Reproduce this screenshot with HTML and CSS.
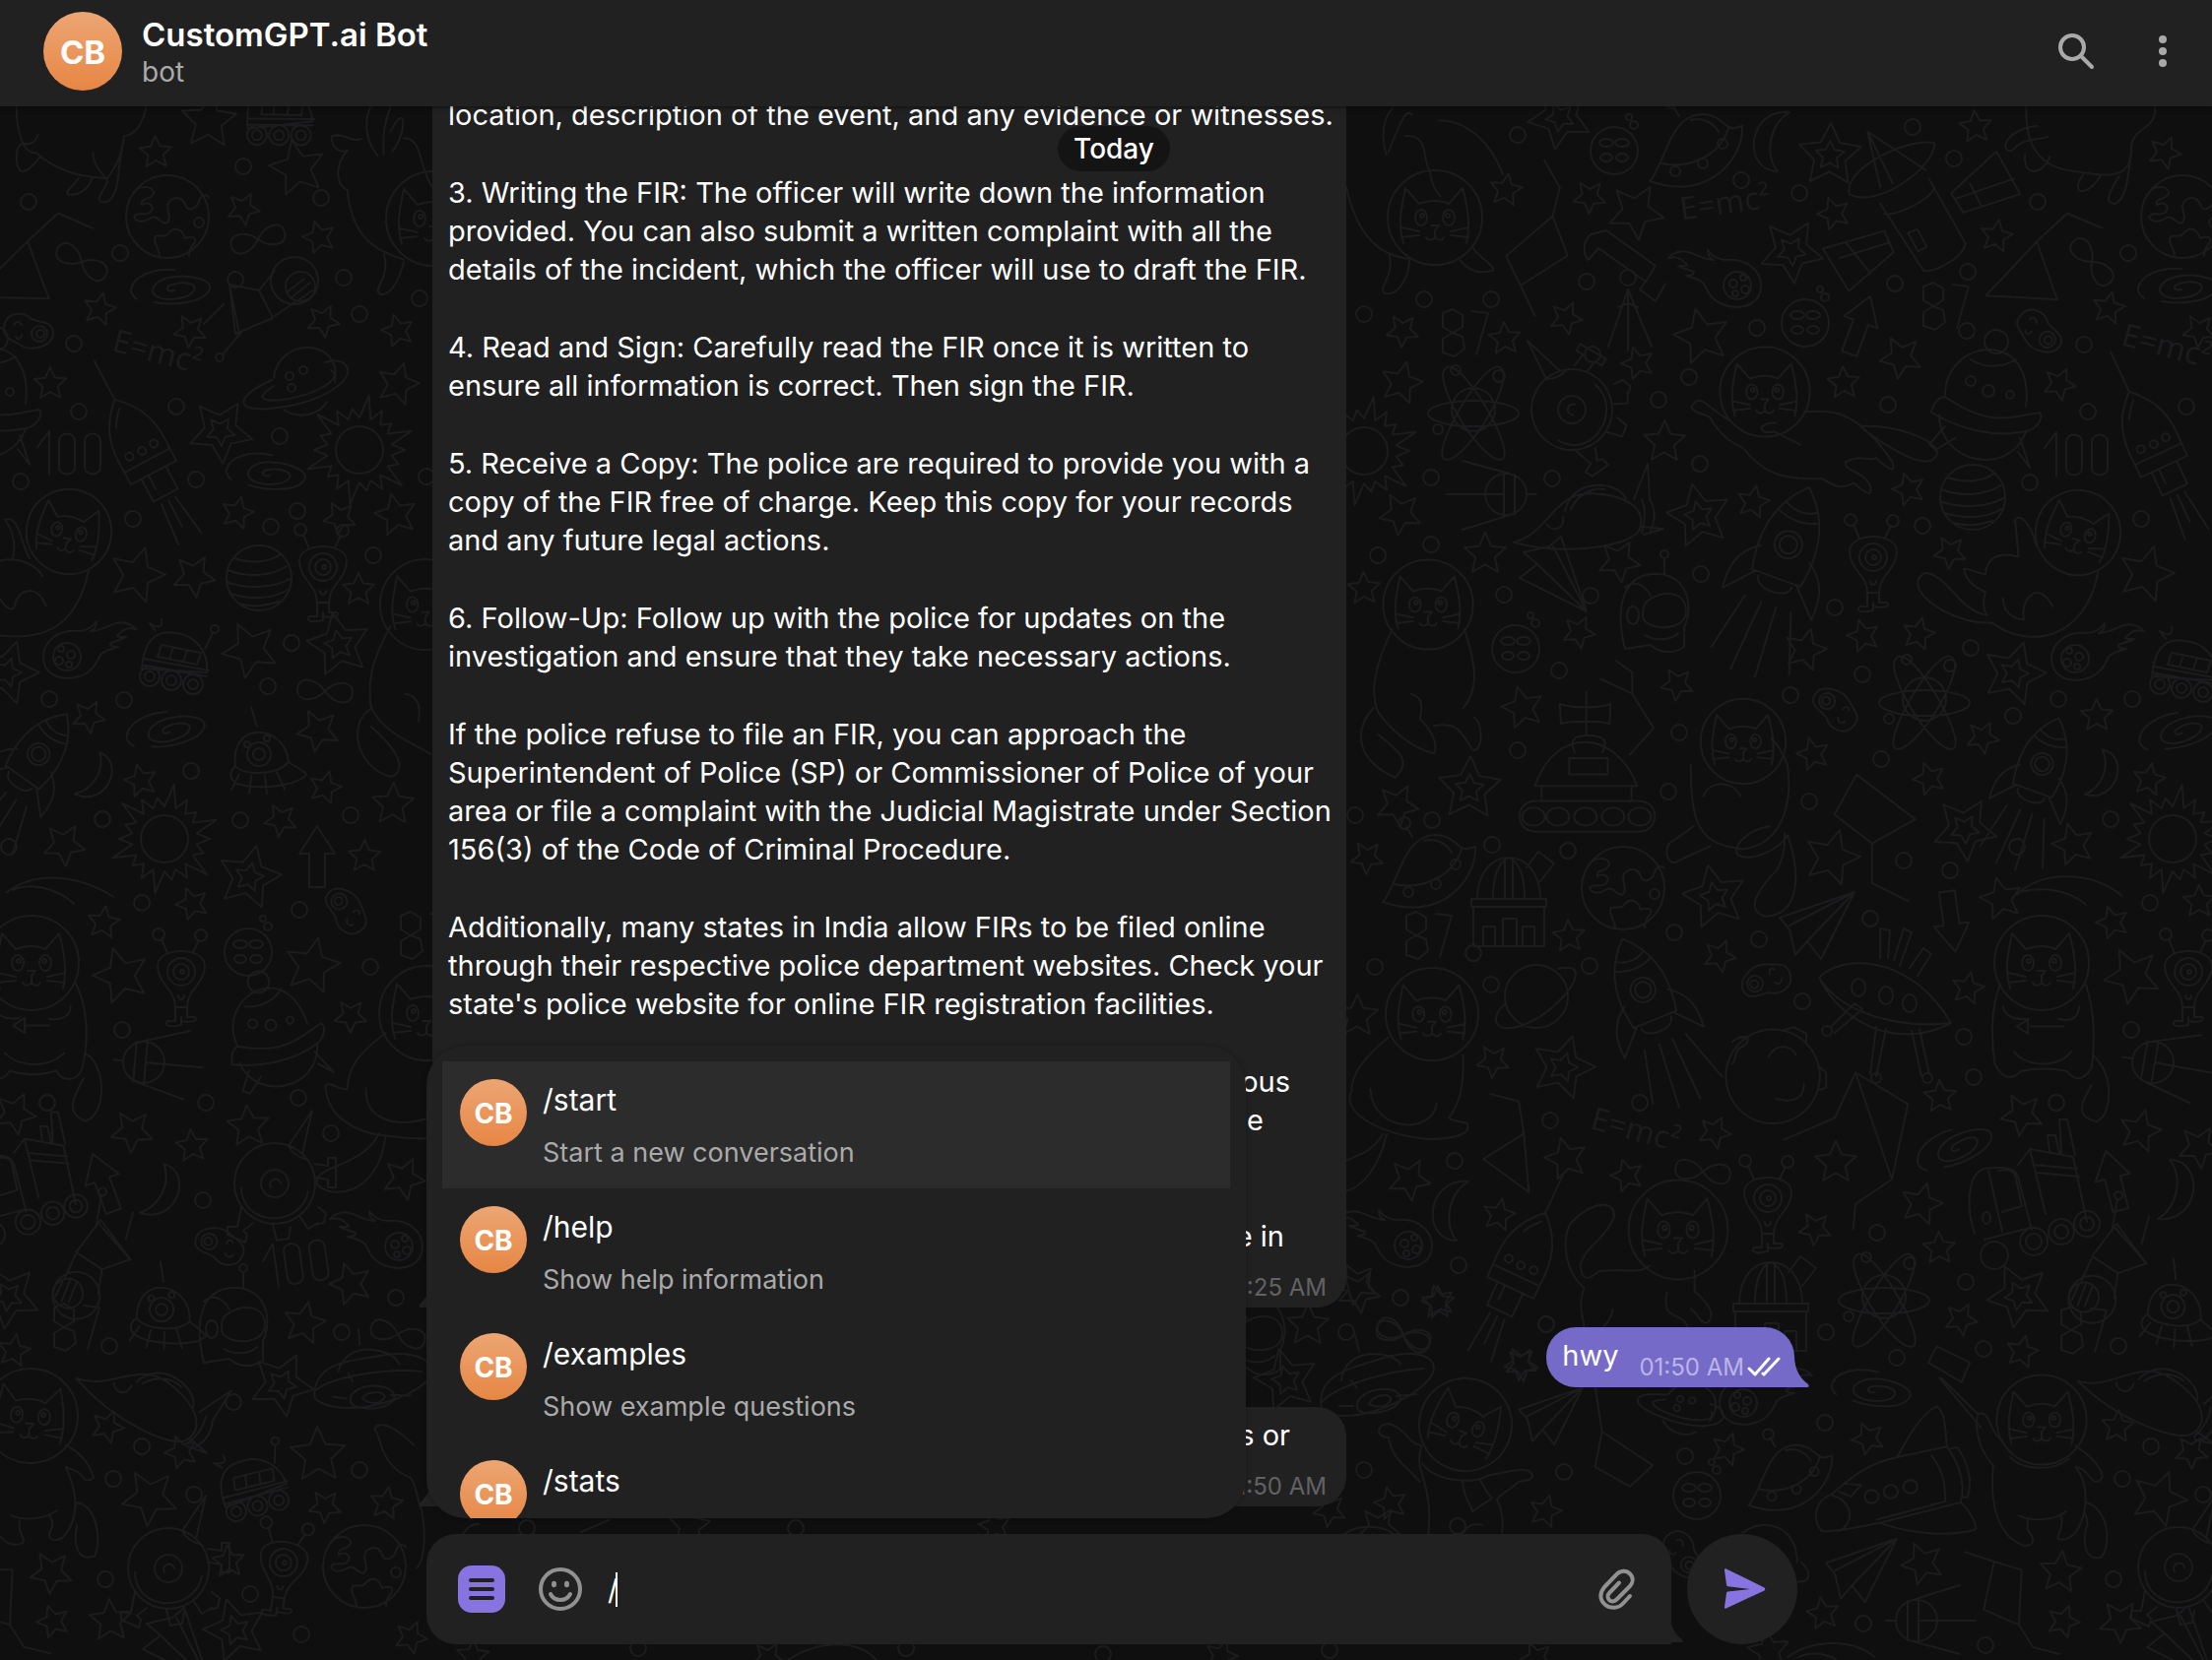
FILE: index.html
```html
<!DOCTYPE html>
<html lang="en">
<head>
<meta charset="utf-8">
<meta name="viewport" content="width=device-width, initial-scale=1">
<title>CustomGPT.ai Bot</title>
<link rel="stylesheet" href="styles.css">
</head>
<body>
<header class="topbar">
  <span class="avatar avatar-lg">CB</span>
  <div class="peer">
    <h1 class="peer-name">CustomGPT.ai Bot</h1>
    <p class="peer-status">bot</p>
  </div>
  <button class="icon-btn" type="button" aria-label="Search">
    <svg width="48" height="48" viewBox="0 0 48 48" fill="none" stroke="currentColor" stroke-width="4" stroke-linecap="round"><circle cx="20" cy="20" r="12"/><path d="M29 29l11 11"/></svg>
  </button>
  <button class="icon-btn" type="button" aria-label="More">
    <svg width="48" height="48" viewBox="0 0 48 48" fill="currentColor"><circle cx="24" cy="12" r="4"/><circle cx="24" cy="24" r="4"/><circle cx="24" cy="36" r="4"/></svg>
  </button>
</header>

<main class="chat">
  <svg class="wallpaper" id="wallpaper" width="2246" height="1686" aria-hidden="true"></svg>
  <div class="date-pill">Today</div>
  <div class="column">
    <section class="messages">
      <article class="bubble bubble-in bubble-first">
        <p>location, description of the event, and any evidence or witnesses.</p>
        <p>3. Writing the FIR: The officer will write down the information<br>provided. You can also submit a written complaint with all the<br>details of the incident, which the officer will use to draft the FIR.</p>
        <p>4. Read and Sign: Carefully read the FIR once it is written to<br>ensure all information is correct. Then sign the FIR.</p>
        <p>5. Receive a Copy: The police are required to provide you with a<br>copy of the FIR free of charge. Keep this copy for your records<br>and any future legal actions.</p>
        <p>6. Follow-Up: Follow up with the police for updates on the<br>investigation and ensure that they take necessary actions.</p>
        <p>If the police refuse to file an FIR, you can approach the<br>Superintendent of Police (SP) or Commissioner of Police of your<br>area or file a complaint with the Judicial Magistrate under Section<br>156(3) of the Code of Criminal Procedure.</p>
        <p>Additionally, many states in India allow FIRs to be filed online<br>through their respective police department websites. Check your<br>state's police website for online FIR registration facilities.</p>
        <p class="tail-text"><span class="end-a">serious</span><span class="end-b">the</span><span class="end-a">&nbsp;</span></p>
        <p class="tail-text"><span class="end-c">are in</span></p>
        <time class="stamp">01:25 AM</time>
        <svg class="tail tail-in" width="16" height="32" viewBox="0 0 16 32"><path d="M16 0v32H3c-3 0-3-3-1-4C8 22 14 12 14 0z" fill="currentColor"/></svg>
      </article>
      <article class="bubble bubble-out">
        <p>hwy</p>
        <time class="stamp">01:50 AM</time>
        <svg class="ticks" width="34" height="22" viewBox="0 0 34 22" fill="none" stroke="currentColor" stroke-width="3" stroke-linecap="round" stroke-linejoin="round"><path d="M2 13l6 6L22 3M16 18l1 1L32 3"/></svg>
        <svg class="tail tail-out" width="16" height="32" viewBox="0 0 16 32"><path d="M0 0v32h14c2 0 2-2 1-3C7 23 1 14 1 0z" fill="currentColor"/></svg>
      </article>
      <article class="bubble bubble-in">
        <p class="tail-text"><span class="end-a">questions or</span></p>
        <time class="stamp">01:50 AM</time>
        <svg class="tail tail-in" width="16" height="32" viewBox="0 0 16 32"><path d="M16 0v32H3c-3 0-3-3-1-4C8 22 14 12 14 0z" fill="currentColor"/></svg>
      </article>
    </section>

    <form class="composer">
      <ul class="commands">
        <li><a class="command is-active" href="#start"><span class="avatar">CB</span><span class="command-text"><b>/start</b><small>Start a new conversation</small></span></a></li>
        <li><a class="command" href="#help"><span class="avatar">CB</span><span class="command-text"><b>/help</b><small>Show help information</small></span></a></li>
        <li><a class="command" href="#examples"><span class="avatar">CB</span><span class="command-text"><b>/examples</b><small>Show example questions</small></span></a></li>
        <li><a class="command" href="#stats"><span class="avatar">CB</span><span class="command-text"><b>/stats</b></span></a></li>
      </ul>
      <div class="field">
        <button class="menu-btn" type="button" aria-label="Bot commands">
          <svg width="48" height="48" viewBox="0 0 48 48" stroke="currentColor" stroke-width="4" stroke-linecap="round"><path d="M13 15h22M13 24h22M13 33h22"/></svg>
        </button>
        <button class="icon-btn emoji-btn" type="button" aria-label="Emoji">
          <svg width="48" height="48" viewBox="0 0 48 48" fill="none" stroke="currentColor" stroke-width="4" stroke-linecap="round"><circle cx="24" cy="24" r="20"/><path d="M14 29c4 8 16 8 20 0"/><ellipse cx="17.500" cy="19" rx="2.500" ry="3.200" fill="currentColor" stroke="none"/><ellipse cx="30.500" cy="19" rx="2.500" ry="3.200" fill="currentColor" stroke="none"/></svg>
        </button>
        <div class="entry">
          <input class="entry-input" type="text" value="/" aria-label="Message">
          <span class="caret"></span>
        </div>
        <button class="icon-btn attach-btn" type="button" aria-label="Attach">
          <svg width="48" height="48" viewBox="0 0 48 48" fill="none" stroke="currentColor" stroke-width="4" stroke-linecap="round" stroke-linejoin="round"><path d="M38 31L31 38.500C26 44 18 44 13 40C7 35 7 28 12 22L24 9.500C28 5 34 4.500 38 8.500C42 12.500 41 17.500 38 21L24.500 34.500C22 37 19 37 17 35C15 33 15 30 17 28L27 17.500"/></svg>
        </button>
        <svg class="tail tail-field" width="14" height="32" viewBox="0 0 16 32"><path d="M0 0v32h14c2 0 2-2 1-3C7 23 1 14 1 0z" fill="currentColor"/></svg>
      </div>
      <button class="send" type="submit" aria-label="Send">
        <svg width="48" height="48" viewBox="0 0 48 48" fill="currentColor"><path d="M6 4.500C5.800 3.400 6.900 3 7.800 3.400L46 22.300C47.700 23.200 47.700 24.800 46 25.700L7.800 43.600C6.800 44 5.800 43.400 6 42.400L8 28C8.200 27 8.600 26.600 9.600 26.500L32 24L9.600 21.200C8.600 21 8.200 20.600 8 19.500z"/></svg>
      </button>
    </form>
  </div>
</main>
<script src="wallpaper.js"></script>
</body>
</html>
```

FILE: styles.css
```css
:root {
  --surface: #212121;
  --page: #0f0f0f;
  --accent: #8774e1;
  --muted: #aaaaaa;
}

* { box-sizing: border-box; }

body {
  margin: 0;
  height: 100vh;
  display: flex;
  flex-direction: column;
  overflow: hidden;
  background: var(--page);
  color: #fff;
  font: 400 29px/39px Inter, "Liberation Sans", sans-serif;
}

p, h1, ul { margin: 0; padding: 0; }
ul { list-style: none; }
button { border: 0; padding: 0; background: none; font: inherit; color: inherit; }
svg { display: block; }

.topbar {
  position: relative;
  z-index: 2;
  flex: none;
  height: 108px;
  padding: 0 26px 4px 44px;
  display: flex;
  align-items: center;
  gap: 40px;
  background: var(--surface);
  box-shadow: 0 1px 4px rgba(0, 0, 0, .5);
}

.avatar {
  flex: none;
  width: 68px;
  height: 68px;
  padding-top: 2px;
  border-radius: 50%;
  display: grid;
  place-items: center;
  background: linear-gradient(#eca673, #e78644);
  font-size: 28px;
  font-weight: 700;
}
.avatar-lg { width: 80px; height: 80px; font-size: 33px; }

.peer { flex: 1; margin-left: -20px; padding-top: 4px; }
.peer-name { font-size: 33px; font-weight: 600; line-height: 38px; }
.peer-status { font-size: 28px; line-height: 38px; color: var(--muted); }
.icon-btn { flex: none; color: var(--muted); }

.chat {
  position: relative;
  flex: 1;
  min-height: 0;
  padding-left: 12px;
  display: flex;
  justify-content: center;
}

.wallpaper {
  position: absolute;
  left: 0;
  top: -108px;
  fill: none;
  stroke: #1c1c1e;
  stroke-width: 2px;
  stroke-linecap: round;
  stroke-linejoin: round;
}
.wallpaper path { vector-effect: non-scaling-stroke; }
.wallpaper text { font: 32px "Open Sans", sans-serif; fill: #1c1c1e; stroke: none; }

.date-pill {
  position: absolute;
  z-index: 1;
  top: 20px;
  left: calc(50% + 8px);
  transform: translateX(-50%);
  padding: 4px 16px 3px;
  border-radius: 23px;
  background: #141414;
  font-size: 28px;
  font-weight: 500;
}

.column {
  position: relative;
  width: 1392px;
  max-width: 100%;
  padding-bottom: 16px;
  display: flex;
  flex-direction: column;
  gap: 28px;
}

.messages {
  flex: 1;
  min-height: 0;
  padding: 0 3px 0 6px;
  display: flex;
  flex-direction: column;
  justify-content: flex-end;
  gap: 20px;
}

.bubble {
  position: relative;
  flex: none;
  padding: 9px 16px 5px;
  border-radius: 30px;
}
.bubble-in {
  width: 928px;
  align-self: flex-start;
  display: flex;
  flex-direction: column;
  background: var(--surface);
  border-bottom-left-radius: 0;
  white-space: nowrap;
}
.bubble-in p + p { margin-top: 40px; }
.bubble-in .stamp { align-self: flex-end; margin: 18px 4px 0 0; color: #626264; }
.bubble-first { border-radius: 0 0 30px 0; }

.tail-text { display: flex; flex-direction: column; align-items: flex-end; }
.end-a { padding-right: 41px; }
.end-b { padding-right: 68px; }
.end-c { padding-right: 47px; }

.stamp { font-size: 24px; line-height: 30px; }

.bubble-out {
  align-self: flex-end;
  display: flex;
  align-items: flex-end;
  height: 61px;
  background: #766ac8;
  border-bottom-right-radius: 0;
}
.bubble-out p { align-self: flex-start; margin-right: 21px; }
.bubble-out .stamp { color: #bbb4e4; }
.bubble-out .ticks { margin: 0 -2px 5px 3px; }

.tail { position: absolute; bottom: 0; color: var(--surface); }
.tail-in { left: -14px; }
.tail-out { right: -15px; color: #766ac8; }
.tail-field { right: -12px; }

.composer {
  position: relative;
  flex: none;
  display: flex;
  gap: 16px;
}

.field {
  position: relative;
  flex: 1;
  height: 112px;
  padding: 0 32px;
  display: flex;
  align-items: center;
  border-radius: 30px 30px 0 30px;
  background: var(--surface);
}
.menu-btn { flex: none; border-radius: 14px; background: var(--accent); color: var(--surface); }
.emoji-btn { margin: 0 24px 0 32px; color: #919191; }
.attach-btn { color: #919191; }

.entry { position: relative; flex: 1; }
.entry-input {
  width: 100%;
  padding: 0;
  border: 0;
  outline: 0;
  background: none;
  color: #fff;
  font: inherit;
}
.caret { position: absolute; left: 8px; top: 2px; width: 2px; height: 35px; background: #fff; }

.send {
  flex: none;
  width: 112px;
  height: 112px;
  border-radius: 50%;
  display: grid;
  place-items: center;
  background: var(--surface);
  color: var(--accent);
}

.commands {
  position: absolute;
  left: 0;
  bottom: calc(100% + 16px);
  z-index: 1;
  width: 832px;
  height: 480px;
  padding: 16px;
  overflow: hidden;
  border-radius: 40px;
  background: var(--surface);
  box-shadow: 0 0 4px rgba(0, 0, 0, .3);
}
.command {
  height: 129px;
  padding: 18px;
  display: flex;
  gap: 16px;
  color: #fff;
  text-decoration: none;
}
.command.is-active { background: #2c2c2c; }
.command-text { display: flex; flex-direction: column; gap: 15px; padding-top: 2px; }
.command b { font-size: 30px; font-weight: 400; line-height: 39px; }
.command small { font-size: 27px; line-height: 38px; color: var(--muted); }
```

FILE: wallpaper.js
```js
// Space doodles behind the conversation.
const NS = "http://www.w3.org/2000/svg";
const root = document.getElementById("wallpaper");

const e = (x, y, a, b) => `M${x - a} ${y}a${a} ${b} 0 1 0 ${2 * a} 0a${a} ${b} 0 1 0 ${-2 * a} 0`;
const c = (x, y, r) => e(x, y, r, r);
const starPath = (r, k = 0.47) => {
  const pts = [];
  for (let i = 0; i < 10; i++) {
    const a = Math.PI * i / 5 - Math.PI / 2, q = i % 2 ? r * k : r;
    pts.push((Math.cos(a) * q).toFixed(1) + " " + (Math.sin(a) * q).toFixed(1));
  }
  return "M" + pts.join("L") + "z";
};
const sunRays = () => {
  const pts = [];
  for (let i = 0; i < 36; i++) {
    const a = Math.PI * i / 18, q = i % 2 ? 33 : [46, 42, 56][(i / 2) % 3];
    pts.push((Math.cos(a) * q).toFixed(1) + " " + (Math.sin(a) * q).toFixed(1));
  }
  return "M" + pts.join("L") + "z";
};

const art = {
  earth: c(0, 0, 42) + "M-34-24c4-8 20-8 20 0c-2 8-14 4-12 12c8-4 14 2 8 8c-6 4-12-2-16 4c2 6 10 6 16 2c8-6 12 8 18 4c6-6-4-14 2-22c8-6 14-2 16 4c2 8 12 4 14-4c2-6 6-8 10-4M-8 40c0-8-8-14-4-20c6-2 10 2 14-4c8-8 14 0 16 6c6-2 12-2 10 4c-4 4-6 8-6 14" + c(32, 6, 5),
  infinity: "M0 0C-10-12-28-14-28 0C-28 14-10 12 0 0C10-12 28-14 28 0C28 14 10 12 0 0z",
  moonface: c(0, 0, 24) + e(-8, -8, 7, 4) + e(8, -8, 7, 4) + e(-8, 7, 6, 4) + e(8, 7, 6, 4) + c(20, -26, 4) + c(15, -34, 3),
  galaxy: "M2 3c-8 2-10-4-2-6c14-4 26 0 22 6c-4 8-28 12-38 6c-10-6 0-18 18-20c20-2 38 4 36 12c-4 14-36 18-56 14M-42 2c2-14 24-22 44-20M-36 12c-6-4-8-10-4-14",
  sun: c(0, 0, 24) + sunRays(),
  comet: c(22, 8, 14) + c(18, 6, 4) + c(28, 0, 3) + c(30, 12, 4) + c(20, 16, 3) + "M46 8c0-16-16-28-34-26c-10 0-16-4-20-10c0 6 2 8 6 10c-10 0-18-6-26-8c-8-2-14 0-20 6c8-2 12 0 16 4c6 4 2 4-6 4c4 2 10 4 16 6c0 4-4 4-8 4c8 2 14 4 18 8c4 8 8 18 22 22c18 6 36-2 36-20z",
  atom: c(0, 0, 22) + e(0, 4, 46, 13) + "M-28-42C-14-56 42 38 30 50C12 60-44-30-28-42M28-42C14-56-42 38-30 50C-12 60 44-30 28-42" + c(-18, -40, 5) + c(26, -34, 6) + c(-36, 20, 5),
  alien: "M-24-12c0-20 48-20 48 0c0 18-18 24-18 42h-12c0-18-18-24-18-42M-6 30v14h-8c-4 6 4 6 14 4v-8M6 30v10h8c4 4-4 6-14 4M-14-25l-6-14M12-26l6-12M-3 18c0 5 6 5 6 0" + c(0, -6, 14) + c(0, -6, 8) + c(1, -6, 2) + c(-23, -44, 6) + c(20, -43, 6),
  pod: c(0, 0, 41) + c(0, 0, 14) + "M-34 4c0 40 60 42 68 4M-4 4c-4-8 8-12 10-4M14-38l24-36l-10 44M14-38c4 8 12 12 20 14M40-20l14 2v-8h8v30h-8v-8l-12-2M-34 24l-4 20l-10 0v8l18 8l2-8l-4-4l10-8M-2 42l4 16l12-2l2-12M26 34l8 12l10-6M44 24l8 6l-2 10l-10 2",
  observatory: "M-36 46v-40h72v40zM-38-2h76v8h-76zM-32-2c0-56 64-56 64 0M-16-2c0-24 6-38 16-42c10 4 16 18 16 42M-4-2v-40M4-2v-40M-6 46V18h14v28M-26 46V26h12v20M14 46V26h12v20M18-34l12-16l16 12l-14 18",
  plane: "M-36-10l76-26l-34 68l-14-18l-12 14l-6-26zM-26-2l66-34l-48 50",
  crescent: "M10-32C-34-36-38 28-2 28C-16 10-10-20 10-32z",
  helmet: "M-30 36c-10-40-4-78 34-76c30 2 36 34 26 54v20c-12 8-26 6-34-2zM-8-12c14-12 40-12 40 10c0 22-44 20-44 4c0-6 0-10 4-14M-30-26c8-8 20-4 26 8M10-40v-16M-10 22c10 6 26 6 34-2" + c(10, -60, 4) + e(-22, 2, 6, 9),
  rover: "M-34 12c2-28 14-40 34-36c20 2 34 18 32 40zM-32 2l66 12M-34 8l66 12M-14-12l40 8l-4 12l-40-8zM-2-10l-4 12M12-7l-4 12M-20-26l-6-8c6 4 14 6 12-4M30-8l8-16" + c(40, -28, 4) + c(-26, 20, 10) + c(-26, 20, 5) + c(-4, 24, 10) + c(-4, 24, 5) + c(18, 28, 10) + c(18, 28, 5),
  rocket: "M0-50c-22 20-28 40-26 70h52c2-30-4-50-26-70zM0-50v-44M-26 20v14h52v-14M-14 34v26h28v-26M-6 34v16M-8 66l-4 44M0 66v30M8 66l6 44M-12-24c4-8 8-12 12-16" + c(-14, 8, 4) + c(0, 9, 4) + c(14, 8, 4),
  bigrocket: "M0-82c-28 26-34 60-26 98h52c8-38 2-72-26-98zM-16-60c10 6 22 6 32 0M-20-50c12 6 28 6 40 0M-26-10c-22 14-24 34-22 54l26-28M26-10c22 14 24 34 22 54l-26-28M-18 20c0 14 36 14 36 0M-24 44l-14 60M-6 44l-6 74M10 44l4 74M26 44l20 60" + c(0, -20, 14) + c(0, -20, 9),
  jet: "M-76 30c36-10 40-50 78-50c44 2 56 20 50 36c-6 18-76 28-128 14M-24-2c8-36 56-30 62-12M-18-4c8-16 22-22 34-20M-42 12c6 8 18 4 16-8M46-14l14-36l2 36M54 14l22 2l-20 6M54-14c4 10 4 22 0 34M62-14c6 10 6 22 0 34",
  saturn: "M-24-2c4-42 70-42 62 4M-26 0c-40 18-38 34 6 28c50-6 82-32 68-44c-4-4-12-4-20-2M-24 6c-20 12-12 16 8 14c34-4 64-22 50-30M-14 30c14 10 36 6 44-8" + c(-8, -4, 4) + c(6, -10, 4) + c(-6, 8, 4),
  ringed: c(0, 0, 32) + "M22-28c50-12-16 66-56 60c-16-6 0-24 2-24",
  ball: c(0, 0, 33) + "M-26-20c18 6 36 4 48-4M-32-8c20 8 46 6 60-4M-33 4c20 8 50 6 66-4M-29 16c20 6 42 6 58-4M-20 26c14 4 28 2 40-2",
  spinner: "M-50 10c2-10 8-16 14-16c46 32 68 20 96 16c4 6-2 14-10 18c-38 10-76-4-100-18zM-36-8c0-26 20-46 46-46c28 2 40 26 36 58M-42 12c0 50 70 64 88 18M-36 24l-16 18l6 6l20-12M40 36l10 30l-12-16M-10-44c14 10 34 8 46 0" + c(16, -62, 12) + c(-10, -22, 5) + c(8, -12, 6) + c(30, -8, 4),
  saucer: "M-46 32C-30 14-26-34 6-36C28-36 30-20 40-22L48-24C50 6 16 54-46 32zM-34 14C-6 20 26 6 34-22M-4-30c12-4 24 4 28 12M-16-34l-6-10" + c(-24, -48, 6) + c(-20, 22, 5) + c(8, 14, 5) + c(28, -6, 5),
  bear: "M-24 4c-6-46 50-44 54-4c6 4 14 8 18 12c-4 14-84 22-76-2c0-2 2-4 4-6zM-24 4c8 10 42 10 54-4M-20 12l-8 16M-8 14l-2 18M6 14l2 18M18 10l8 18M-2-36l-6-20" + c(0, -8, 12) + c(0, -8, 6) + c(-12, -18, 3) + c(8, -24, 3),
  sputnik: c(0, 0, 21) + "M-2-21v42M9-20v40M-60-0H-2M-44-34L4-21M-44 36L4 21M21 0h10",
  potato: "M-24-6c2-16 20-16 28-8c8 4 22 2 22 14c0 14-22 20-34 12c-10-6-18-8-16-18M-14-8c2-4 6-4 8 0M-12 4c2 4 6 2 6-2" + c(12, 1, 8) + c(13, 1, 4),
  arrow: "M0-32l18 28H8v34H-8V-4h-10z",
  hundred: "M-34-8l12-16v44M-12-14c0-10 16-10 16 0v26c0 10-16 10-16 0zM14-14c0-10 16-10 16 0v26c0 10-16 10-16 0z",
  hexes: "M-8-22l10-4l10 6v12l-10 6l-10-6zM2-2l10 4l2 12l-10 8l-12-4v-14zM22-24l16 2l-12 42",
  scope: "M-38-42c-8 8-8 20-2 26l10-12l48 34l10-16l-50-36zM18 6l-6 8l16 12l10-18M0 14l-20 58M0 14v62M0 14l24 58M-10 32l10-4l10 4" + c(0, 2, 8),
  probe: "M-34-20l30 6l14 28l-38 16zM-34-20l10 50M-4-14l16-20M12 12l20-14M-20 26l-20 24M-40 0l-20 20" + c(32, -24, 24) + c(38, -18, 15) + c(-44, 54, 4) + "M24-12l18-14M28-6l20-16M36-4l14-10",
  disc: "M-56 22c-8-40 40-44 66-54c40-10 60 6 40 26c-26 26-84 44-106 28M-36-8c4-36 54-30 60-16M-56 14c14-16 66-32 104-34M-18-38l-4-16M-20 18c0-18 42-24 44-8c0 14-44 22-44 8M-8 16c4-10 24-12 22-4c-4 8-14 8-22 4M-38 18h14M20 8l20-2M-20 0l-6-8",
  truck: "M-54 30c-10-30-6-62 10-66c20-2 30-2 34 8l14 54M-44 36l46-12M-40-34l14 62M-30-34c14-2 16 0 18 8l6 28l-20 6M-10-40l12-16l44 8l14 66M2-56l16 66M6-40l44 4M8-32l44 4M22-54l-2-16h8l4 18M34-52l-2-34h8l8 36" + c(6, 38, 14) + c(6, 38, 8) + c(34, 28, 13) + c(34, 28, 7) + c(60, 20, 13) + c(60, 20, 7) + c(-34, 52, 14) + e(-42, 14, 4, 6),
  lander: "M-66-20c20-22 90-28 134 46c-50 6-110-8-134-46M-66-20c26 52 86 72 134 46M-54 30l24-24l8 6l-28 24M-8 30l-6 48M2 32l-10 48M28 34l10 46M36 32l10 46M-4-40v-30l10 2l-2 28M10-38l10-32l8 4l-12 34M26-30l14-20l8 6l-14 22" + e(-26, -10, 7, 9) + e(2, -2, 7, 9) + e(26, 6, 7, 9) + c(-58, 34, 5) + c(-8, 82, 5) + c(44, 82, 5),
  cat: c(0, 0, 48) + "M-32 26c-6-20-2-36 2-56l14 16c10-4 22-4 30 0l14-16c6 22 8 38 4 56M-4 8h8l-4 5v8M0 20c-3 4-8 3-9 0M0 20c3 4 8 3 9 0M-16 14l-18-4M-16 18l-18 2M16 14l18-4M16 18l18 2" + e(-14, 0, 6, 8) + e(14, 0, 6, 8) + c(-13, -2, 2) + c(13, -2, 2)
};

// Each field has an origin, a grid unit and doodles placed in that grid.
const fields = [
  { at: [1366, 90], unit: [0.5612, 0.4464],
    ring: "312,106 717,208 1026,88 1102,160 822,238 436,440 143,479 263,480 34,514 447,604 622,657 744,545 994,444 1127,417 1252,257 1417,374 1125,551 1336,582 567,707 982,718 1344,735 1521,724 642,854 155,884 375,888 1238,896 1440,978 1045,995 155,1038 58,1061 287,1152 443,1154 644,1104 886,1181 386,1323 935,1332 1131,1272 1290,1390 1424,1390 1208,1427 604,1465 805,1381 312,1505 969,1525",
    small: "291,230 442,246 1141,87 1482,146 883,285 1177,335 104,552 288,570 400,522 530,626 1381,500 1545,550 901,670 1291,673 1020,912 737,940 1094,1054 34,1138 423,1237 937,1246 1037,1240 600,1356 1360,1427 1152,1476 847,1514",
    medium: "102,670 99,968 253,1060 495,1076 320,1410 832,1278 1005,612 577,805",
    big: "525,280 645,565 1448,1105", double: "388,66 876,153 808,370 640,972 1210,1330",
    put: [["earth", 1514, 291], ["saucer", 632, 140], ["infinity", 1350, 395, 50], ["moonface", 486, 142], ["moonface", 833, 533], ["moonface", 308, 1275], ["galaxy", 1510, 450], ["galaxy", 1510, 1460, -12], ["sun", 34, 825], ["comet", 670, 430], ["comet", 1360, 1280, 0, -1], ["atom", 232, 730], ["atom", 1047, 1390], ["alien", 955, 1080], ["pod", 410, 730, -60], ["plane", 372, 1100, 90], ["crescent", 785, 125], ["helmet", 560, 1195], ["rover", 1520, 1310], ["rocket", 1455, 790, -25], ["bigrocket", 790, 1080, 20], ["jet", 440, 965], ["ball", 1135, 930], ["spinner", 1150, 715], ["sputnik", 290, 922], ["potato", 1252, 555, 30], ["potato", 890, 1410, 210], ["arrow", 930, 540, 20], ["hundred", 1325, 835], ["hexes", 1060, 500], ["hexes", 190, 560], ["scope", 512, 425], ["cat", 163, 294], ["cat", 759, 690, 0, 0.95], ["cat", 150, 1173, 0, 0.95], ["cat", 1325, 1010, 15, 0.9], ["cat", 720, 1485, 0, 0.9], ["bigrocket", 1250, 1570, 20, 0.8]],
    lines: "M360 163L388 225L375 290L291 381L317 448L343 517M375 290L402 380L317 448M1306 284L1369 317M1306 284L1251 348L1159 471L1288 480L1251 348M168 72C220 72 262 120 285 195M912 240C900 180 1020 110 1066 124C1068 180 960 275 912 240M945 98L990 215M945 98L968 225M945 98L1050 185M968 262L1046 414C1070 420 1120 380 1122 352L1056 205M975 285C1000 290 1060 250 1066 225M864 364L975 324L992 372L911 461ZM905 350L950 420M895 385L985 350M1178 143L1221 240L1118 282L1096 238ZM1130 215L1150 265M1105 250L1210 205M1018 328L1035 320L1052 360L1036 370ZM2 225C20 330 60 380 115 387M80 380C88 430 60 450 70 465C95 475 115 430 116 390M230 360C240 385 270 400 268 413C240 425 220 410 207 390M108 108C150 100 140 160 152 185C155 210 160 230 172 245M85 45C60 80 70 130 74 150M120 60C110 40 95 90 78 145M1232 42C1230 130 1255 180 1320 188C1380 200 1425 210 1422 130C1425 90 1470 90 1465 42M1252 85C1200 90 1180 140 1205 142C1230 110 1240 120 1270 110M1230 150C1225 200 1260 200 1275 155M1335 195C1310 240 1340 250 1366 200M1400 200C1385 230 1370 260 1392 262C1415 250 1415 200 1422 150M695 755C650 720 640 690 626 725C640 750 655 730 665 760C700 820 720 810 725 825C760 880 800 890 862 887C890 910 900 910 920 897C950 930 952 925 950 905C940 870 900 870 905 850C930 830 950 850 960 840C990 875 995 870 990 850C960 790 940 780 930 765C890 725 850 735 830 735M935 768C1000 765 1070 800 1071 830C1060 870 1010 840 942 780M780 760C740 760 750 790 775 780L823 810M85 1230C50 1320 45 1380 60 1420C100 1490 150 1510 160 1512C170 1490 150 1450 135 1435C140 1400 140 1385 118 1377M215 1230C240 1320 240 1370 213 1410M160 1450C200 1440 210 1460 230 1505C250 1510 250 1440 232 1430M52 1408C20 1450 10 1520 90 1568C120 1530 100 1510 60 1470M1210 985C1220 960 1240 990 1250 1040M1212 980L1218 1065C1170 1050 1160 1080 1158 1105C1140 1100 1120 1090 1119 1092C1125 1130 1150 1140 1158 1145C1150 1180 1160 1195 1162 1198C1110 1190 1090 1105 1050 1102C1000 1130 1090 1220 1170 1215C1240 1280 1340 1250 1362 1100M1190 1160C1190 1200 1220 1210 1228 1207C1220 1170 1250 1110 1280 1178M436 1372V1470M388 1400C410 1410 460 1410 480 1400L478 1445C460 1438 410 1438 390 1445ZM490 1302L519 1328V1377L462 1343M519 1377L558 1455L515 1515M415 1510C405 1480 415 1472 440 1472C470 1472 475 1485 465 1510",
    mark: [[690, 285, -8], [1480, 610, 15]] },
  { at: [1366, 750], unit: [0.5612, 0.4464],
    ring: "157,187 18,175 265,241 402,256 585,120 839,144 1385,184 1215,247 1010,278 1094,300 1456,374 949,411 596,442 748,457 232,489 53,520 442,518 264,561 827,597 1119,678 1136,770 1422,662 1286,828 532,828 371,870 197,962 963,1125 1122,1237 205,1198 100,1272 364,1333 870,1350 1154,1390 998,1410 1398,1382",
    small: "1056,92 1454,94 40,270 405,450 677,494 1388,420 1126,570 267,735 1077,815 668,897 510,995 278,1085 850,1116 1075,1160 1114,1322 168,1281 1225,1395 317,1423 1545,372",
    medium: "95,152 1316,242 1438,893 1224,855 888,965 115,1003 400,957 1042,1060 20,1240 22,632 1545,930 1186,365",
    big: "880,272 1423,540", double: "225,115 1120,205 669,360 393,748 1218,1268",
    put: [["earth", 503, 340], ["saucer", 150, 300], ["infinity", 646, 985, 8], ["infinity", 105, 1357, 15], ["galaxy", 1105, 930, -20], ["galaxy", 955, 1480, 10], ["sun", 1497, 228], ["comet", 75, 1135], ["atom", 975, 1270], ["alien", 765, 1060], ["alien", 1525, 545], ["observatory", 295, 370], ["observatory", 770, 1290], ["plane", 850, 430], ["crescent", 205, 1080], ["crescent", 1487, 1022, 180], ["crescent", 1360, 75, 190, 0.8], ["rocket", 325, 1180, 25], ["bigrocket", 550, 610, -22, 0.9], ["ringed", 345, 588], ["lander", 975, 590], ["sputnik", 1462, 738, 190], ["potato", 760, 547, 150], ["arrow", 1095, 415, 172], ["arrow", 1390, 1007, -14], ["hexes", 125, 452], ["truck", 1235, 1060], ["probe", 1380, 1195, 150], ["bear", 1495, 1310, 10], ["jet", 1470, 1490, 30], ["hexes", 1310, 1350], ["cat", 157, 628, 0, 0.98], ["cat", 1260, 510], ["cat", 602, 1118, 0, 1.05]],
    lines: "M343 108C380 -30 490 -20 528 108ZM355 110V140M518 110V140M345 142H530C570 142 570 212 530 212H345C305 212 305 142 345 142ZM320 178A20 20 0 1 0 361 178A20 20 0 1 0 320 178M364 178A20 20 0 1 0 405 178A20 20 0 1 0 364 178M414 178A20 20 0 1 0 455 178A20 20 0 1 0 414 178M464 178A20 20 0 1 0 505 178A20 20 0 1 0 464 178M512 178A20 20 0 1 0 553 178A20 20 0 1 0 512 178M405 45H475V82H405ZM625 60C625 200 640 240 720 252C790 240 810 150 800 60C790 30 780 10 770 0M648 130C660 95 700 95 715 130M630 200L585 240C575 270 590 290 600 280L660 245M768 200C720 210 700 250 710 265C730 280 780 260 800 220C820 290 830 400 760 405C720 390 750 340 780 300C795 270 795 240 795 215M925 82L885 173L953 239L1031 184ZM953 239V329L1018 370M263 809L314 826L323 899L250 957L332 1032L323 899M923 760L1018 832L989 1003L923 760L886 863L855 880L793 913M989 1003L923 1059L919 1116M1215 355C1260 300 1350 300 1405 358M1218 350C1260 335 1310 345 1340 378M773 662A85 107 0 1 0 774 662M700 690C720 670 740 680 720 700C700 710 710 730 700 740M790 665L812 657L834 672V695M765 725C780 690 810 700 815 720M780 820C810 830 830 820 830 785M855 745L870 760V795L855 800M78 680C30 730 10 770 12 800C-10 850 60 900 150 912C200 910 230 900 220 875C200 870 190 870 187 862C210 830 215 780 213 720M45 797C50 900 160 900 165 830M75 900C60 980 30 1020 2 1030M68 900C50 940 20 950 2 960M1185 560C1165 620 1170 700 1175 740C1190 780 1210 775 1222 757C1250 750 1280 750 1305 757C1320 780 1335 780 1350 750C1360 660 1350 600 1340 560M1210 712C1230 750 1295 750 1313 712M1190 610C1195 640 1220 640 1236 638M1328 610C1325 640 1310 645 1290 638M1215 655L1235 640V672ZM1240 655H1300M1352 720C1390 760 1390 850 1360 872C1320 860 1330 830 1350 790M432 1250C420 1290 430 1310 432 1340M432 1250C395 1210 390 1130 410 1100C450 1050 490 1050 486 1090C470 1140 430 1160 425 1200C430 1240 440 1230 460 1212C500 1205 530 1220 550 1200M632 1210V1258C660 1290 670 1310 655 1330C640 1330 640 1310 625 1298M582 1260C570 1330 610 1300 620 1340M484 1300C480 1320 475 1330 468 1337M1055 1420L1070 1383L1130 1420L1115 1465ZM1075 1455L1150 1568",
    mark: [[520, 915, 15]] },
  { at: [1700, 1400], unit: [0.3482, 0.3333],
    ring: "438,135 32,237 1390,208 1307,305 1541,353 1282,613 907,812 551,748",
    small: "155,215 566,182 1293,146 1507,225 434,718 1133,742", medium: "724,563 1125,590 1300,742 275,830", big: "1412,365", double: "",
    put: [["saucer", 335, 300, 0, 0.9], ["moonface", 65, 357], ["comet", 265, 50, 0, -1], ["pod", 1470, 575], ["plane", 540, 590, 0, 0.95], ["sputnik", 706, 737, 180], ["saturn", 30, 80, 30, 0.8], ["potato", 20, 540, 45], ["cat", 1070, 125, 0, 0.95], ["plane", 1470, 800, 90]],
    lines: "M847 529L933 558L1013 584L1005 751L902 704L933 558M1005 751L1046 819L1124 840M430 465C400 430 410 370 460 352C520 300 560 260 650 240L795 208C830 260 850 320 835 378L600 440C540 450 480 470 430 465M455 355C520 370 530 440 480 465M650 240C690 160 730 100 765 85C790 100 790 150 795 208M750 235C790 290 790 330 790 375L592 430M600 440C700 480 820 480 880 460C880 440 860 400 835 378M800 215L825 210C860 260 870 320 855 362L840 362M495 320L545 325L515 360L480 345M780 0L885 108C875 160 890 220 930 265C920 380 940 480 1020 510C1060 510 1045 480 1030 460V430M1005 418C1040 435 1110 435 1143 404M1128 420C1140 460 1110 480 1120 490C1170 500 1205 430 1198 340C1195 310 1185 290 1170 270C1200 270 1210 310 1230 315C1255 310 1250 290 1240 275C1220 240 1200 230 1170 205M1200 378C1260 390 1280 500 1245 545C1190 560 1190 480 1205 445C1205 420 1200 420 1197 410M885 108C920 95 915 150 950 185M980 240C1020 285 1110 280 1150 245M330 850C400 795 520 790 585 850M360 850C400 830 440 840 470 855M200 470C260 420 360 450 358 560M370 560C400 590 400 620 360 620M555 360A20 20 0 1 0 596 360A20 20 0 1 0 555 360M611 345A20 20 0 1 0 652 345A20 20 0 1 0 611 345M668 330A20 20 0 1 0 709 330A20 20 0 1 0 668 330" },
  { at: [0, 90], unit: [0.3333, 0.5102],
    ring: "742,155 87,225 978,218 365,327 718,381 1046,377 1094,448 1278,418 226,508 240,643 538,633 853,691 598,779 63,783 404,856 906,840 824,872 1137,929 1299,773 889,1104 817,1190 150,1216 377,1217 581,1358 732,1457 1069,1447 311,1455 27,1510",
    small: "473,127 741,240 973,296 302,440 578,482 152,588 984,463 1211,482 723,845 1036,855 1093,997 270,1250 428,1377 990,1392 855,1457 1110,1528",
    medium: "590,970 1205,848 1211,588 968,1278 1198,1425 195,1505", big: "907,158 417,968 762,1118 635,65", double: "672,683 1033,1107 20,1163",
    put: [["earth", 510, 255], ["infinity", 250, 345, 30], ["infinity", 785, 300, -15], ["infinity", 990, 1200, 5], ["galaxy", 525, 395], ["galaxy", 815, 765, 8], ["galaxy", 510, 1275, -8], ["sun", 1095, 720], ["sun", 500, 1493], ["comet", 270, 1115, 0, -1], ["alien", 985, 965], ["crescent", 275, 1362, 200, 0.8], ["rover", 535, 1130], ["rover", 850, 45, -10], ["rocket", 420, 705, -28], ["ball", 788, 975], ["saturn", 905, 580], ["probe", 800, 430], ["potato", 85, 487], ["hundred", 215, 730], ["arrow", 967, 1530], ["bear", 790, 1340], ["cat", 210, 882, 12, 0.9], ["cat", 1320, 258], ["cat", 1295, 1028, 0, 0.96], ["bigrocket", 90, 1350, 35, 0.8], ["spinner", -60, 620]],
    lines: "M177 248L283 278M177 248L84 304L149 418L-10 416M84 304L-10 365M50 35C50 100 80 130 110 128C200 180 300 175 325 180C360 150 370 130 378 95C420 90 440 60 445 35M116 92C90 130 60 90 50 130C50 180 80 170 120 138M240 178C220 200 200 200 205 210C240 215 270 200 280 178M283 128C285 160 320 170 328 185C310 210 290 220 310 226C350 230 360 190 362 160L378 95M1190 35C1160 90 1170 110 1168 130M1150 133C1110 100 1110 60 1130 35M1010 95C1040 85 1080 110 1100 100M1010 95C1010 120 1040 130 1060 122C1020 150 1020 190 1058 202C1070 280 1120 320 1230 340M1170 330C1190 380 1130 400 1160 410C1200 410 1220 370 1230 345M1190 85C1240 20 1240 90 1195 125M1230 98C1290 100 1270 150 1320 200M270 960C230 1080 120 1100 -10 1088M15 858C60 850 60 900 90 935M15 858C40 880 50 910 38 935M0 940C60 930 110 950 130 970M-5 1010C20 1040 40 1040 45 1030C50 1000 110 980 140 1030M1190 1070C1130 1140 1120 1180 1130 1230C1170 1290 1290 1310 1310 1325M1130 1235C1060 1260 1080 1350 1190 1370C1240 1360 1220 1320 1130 1270M1235 1205C1280 1210 1280 1240 1275 1260",
    mark: [[470, 545, 15]] },
  { at: [0, 886], unit: [0.3333, 0.5102],
    ring: "431,61 913,75 1128,188 373,313 143,458 628,458 908,448 1009,519 618,652 1205,847 332,943 1042,915 711,1054 433,1143 346,1207 591,1238 1096,1190 321,1408 763,1437 918,1518",
    small: "585,62 316,100 1067,286 585,545 328,1103 553,1155 1177,1257 990,1263 697,1372 1251,1522 163,1492 42,953",
    medium: "403,515 757,505 1230,610 1067,820 926,898 155,1393 337,1490 45,480", big: "370,205 950,187 456,1245 968,1160", double: "857,1020 718,1510 760,10 25,845",
    put: [["earth", 1110, 1382], ["infinity", 1212, 920, 15], ["moonface", 756, 158], ["comet", 1150, 730], ["alien", 552, 210], ["alien", 860, 1385, 8], ["pod", 838, 620], ["pod", 512, 1385], ["plane", 530, 1535, 90], ["crescent", 475, 627, 195, 0.9], ["helmet", 710, 905], ["rover", 765, 1215, -25], ["jet", 470, 1045, 35], ["sputnik", 437, 378, 185], ["potato", 1060, 75, 220], ["potato", 672, 740, 190], ["arrow", 315, 620, -20], ["hundred", 905, 780, -8], ["hexes", 1245, 130], ["spinner", 820, 330, -25, 0.9], ["truck", 70, 630, 0, 0.9], ["probe", 280, 770, 150], ["bear", 490, 885, 8], ["disc", 1135, 1020, 8], ["hexes", 190, 910], ["cat", 92, 1082, 5], ["cat", 95, 180], ["cat", 1300, 280]],
    lines: "M20 40C100 0 220 0 345 48M40 35C90 20 170 30 225 62M230 220C270 270 270 340 250 390C240 415 190 420 172 395C120 405 80 405 30 395C20 405 10 410 0 410M15 360C60 390 150 390 195 360M215 265C215 290 180 295 150 292M0 285C20 292 40 292 60 290M40 305L75 290V320ZM75 305H150M262 362C320 380 330 480 260 495C200 480 220 450 255 410M200 1140C230 1150 270 1170 285 1205C260 1220 250 1200 240 1195C230 1190 220 1190 200 1183C240 1240 240 1290 190 1325C160 1335 140 1325 155 1310C165 1300 160 1290 150 1280M175 1270C130 1290 70 1290 32 1280M60 1290C50 1320 80 1320 70 1335C30 1345 10 1330 0 1322M235 1255C290 1260 310 1320 290 1360C240 1375 220 1340 235 1300M-5 1388L38 1388L30 1498L-10 1490M30 1498L73 1542L155 1555M1175 320C1090 360 1060 390 1058 432C1020 430 990 410 992 430C1000 490 1090 520 1180 525C1230 530 1270 530 1300 530M1115 430C1110 490 1200 510 1300 490M1155 520C1100 590 960 580 965 620C1000 650 1150 650 1175 525M1140 1110C1150 1090 1200 1100 1260 1140M1140 1110C1160 1110 1150 1180 1250 1205C1270 1220 1270 1250 1285 1270C1300 1330 1290 1370 1270 1385" },
  { at: [1240, 1310], unit: [0.3333, 0.3333],
    ring: "546,24 382,129 991,104 436,549 1043,554", small: "660,38 916,228 517,652 988,675 330,672", medium: "265,108 420,5", big: "", double: "197,275",
    put: [["infinity", 555, 138, 25], ["disc", 475, 300], ["cat", 743, 412, 20, 0.98], ["plane", 1000, 390, 0, 0.85], ["helmet", 90, 140]],
    lines: "M610 475C570 470 560 420 510 408C470 410 470 450 510 450C520 520 570 540 605 585M610 475C590 540 620 560 630 640C640 690 630 720 632 745M612 530C660 590 770 590 815 565C860 560 940 530 948 565C945 590 910 575 900 590C880 610 850 620 840 640C860 680 860 710 855 740M735 585C740 640 760 650 765 675L825 635C800 610 800 590 785 578M735 745C750 715 770 712 795 716M1140 300L1160 432L1139 540L1245 600L1315 535L1160 432M375 745C410 715 490 715 525 745" },
  { at: [0, 0], unit: [1, 1],
    ring: "535,1552 808,1552 920,1674 648,1674 1120,1680 1350,1676 1480,1550", small: "480,1682 780,1684 1010,1550 1240,1682 1560,1684", medium: "700,1550 1400,1552", big: "", double: "", put: [],
    lines: "M470 1558C478 1546 486 1548 486 1548M590 1556L618 1544M800 1686C830 1666 870 1664 890 1686" }
];

const add = (parent, tag, attrs) => {
  const node = document.createElementNS(NS, tag);
  for (const key in attrs) node.setAttribute(key, attrs[key]);
  return parent.appendChild(node);
};

let turn = 0;
for (const f of fields) {
  const pos = (x, y) => [f.at[0] + x * f.unit[0], f.at[1] + y * f.unit[1]].map(Math.round).join(" ");
  const scatter = (list, draw) => list.split(" ").filter(Boolean).forEach((item) => {
    const [x, y] = item.split(",").map(Number);
    turn = (turn + 29) % 72;
    add(root, "path", { d: draw, transform: `translate(${pos(x, y)}) rotate(${turn})` });
  });
  scatter(f.ring, c(0, 0, 8));
  scatter(f.small, starPath(17));
  scatter(f.medium, starPath(22));
  scatter(f.big, starPath(29));
  scatter(f.double, starPath(33, 0.5) + starPath(15, 0.5));
  for (const [name, x, y, rot = 0, size = 1] of f.put) {
    add(root, "path", { d: art[name], transform: `translate(${pos(x, y)}) rotate(${rot}) scale(${size} ${Math.abs(size)})` });
  }
  add(root, "path", { d: f.lines, transform: `translate(${f.at.join(" ")}) scale(${f.unit.join(" ")})` });
  for (const [x, y, rot] of f.mark || []) {
    add(root, "text", { transform: `translate(${pos(x, y)}) rotate(${rot})`, "text-anchor": "middle" }).textContent = "E=mc²";
  }
}
```
